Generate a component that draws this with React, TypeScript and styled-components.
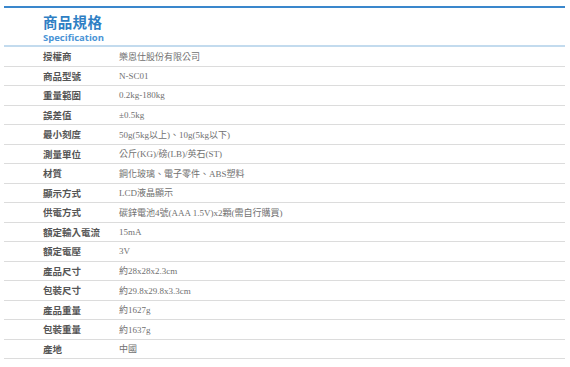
import React from "react";
import styled, { createGlobalStyle } from "styled-components";

const Global = createGlobalStyle`
  html, body { margin: 0; padding: 0; background: #fff; }
  body { font-family: "Noto Sans CJK TC", "Noto Sans", sans-serif; }
`;

const Page = styled.div`
  padding: 6px 5px 0 4px;
  width: 561px;
`;

const Header = styled.div`
  border-top: 2px solid #3a87cc;
  border-bottom: 2px solid #c3dbee;
  padding: 5px 0 0 39px;
  display: flex;
  flex-direction: column;
  height: 32px;
`;

const Title = styled.div`
  font-family: "Noto Sans CJK TC", sans-serif;
  font-weight: 700;
  font-size: 14.5px;
  line-height: 16px;
  margin-top: 1px;
  color: #2f7fc4;
  letter-spacing: 0.3px;
`;

const Subtitle = styled.div`
  font-family: "Open Sans", "Noto Sans", sans-serif;
  font-weight: 700;
  font-size: 9.5px;
  line-height: 10px;
  margin-top: 3px;
  color: #4a94d6;
`;

const Table = styled.div`
  display: flex;
  flex-direction: column;
`;

const Row = styled.div`
  display: grid;
  grid-template-columns: 76px 1fr;
  align-items: center;
  height: 18.5px;
  border-bottom: 1px solid #dcdcdc;
  padding-left: 39px;
`;

const Label = styled.div`
  font-family: "Noto Sans CJK TC", sans-serif;
  font-weight: 700;
  font-size: 9.5px;
  color: #555;
  white-space: nowrap;
`;

const Value = styled.div`
  font-family: "Liberation Serif", "Noto Sans CJK TC", serif;
  font-size: 9px;
  color: #707070;
  white-space: nowrap;
`;

const specs: [string, string][] = [
  ["授權商", "樂恩仕股份有限公司"],
  ["商品型號", "N-SC01"],
  ["重量範圍", "0.2kg-180kg"],
  ["誤差值", "±0.5kg"],
  ["最小刻度", "50g(5kg以上)、10g(5kg以下)"],
  ["測量單位", "公斤(KG)/磅(LB)/英石(ST)"],
  ["材質", "鋼化玻璃、電子零件、ABS塑料"],
  ["顯示方式", "LCD液晶顯示"],
  ["供電方式", "碳鋅電池4號(AAA 1.5V)x2顆(需自行購買)"],
  ["額定輸入電流", "15mA"],
  ["額定電壓", "3V"],
  ["產品尺寸", "約28x28x2.3cm"],
  ["包裝尺寸", "約29.8x29.8x3.3cm"],
  ["產品重量", "約1627g"],
  ["包裝重量", "約1637g"],
  ["產地", "中國"],
];

export default function App() {
  return (
    <>
      <Global />
      <Page>
        <Header>
          <Title>商品規格</Title>
          <Subtitle>Specification</Subtitle>
        </Header>
        <Table>
          {specs.map(([k, v]) => (
            <Row key={k}>
              <Label>{k}</Label>
              <Value>{v}</Value>
            </Row>
          ))}
        </Table>
      </Page>
    </>
  );
}
